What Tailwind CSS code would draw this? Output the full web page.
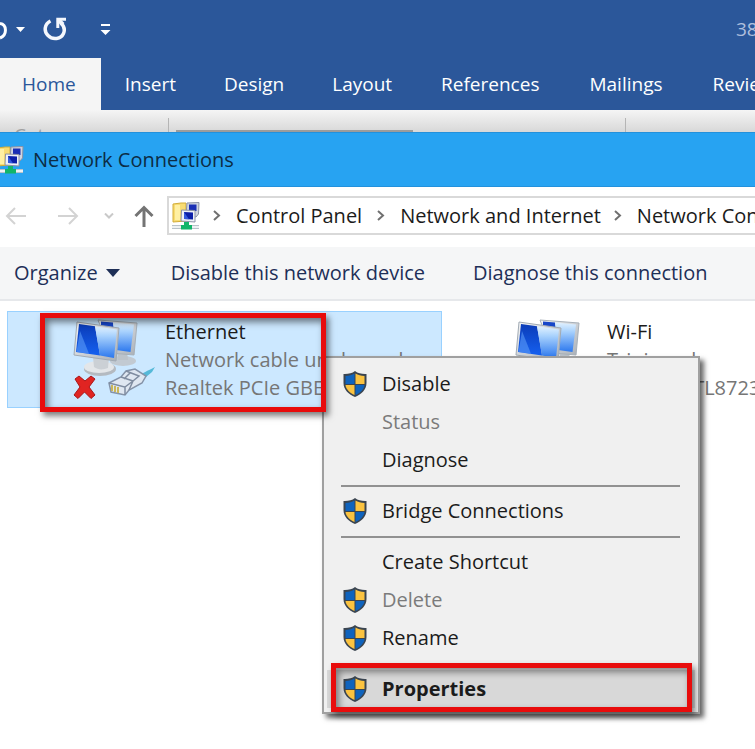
<!DOCTYPE html>
<html lang="en">
<head>
<meta charset="utf-8">
<title>Network Connections</title>
<script src="https://cdn.jsdelivr.net/npm/@tailwindcss/browser@4"></script>
</head>
<body class="min-h-screen overflow-hidden bg-white font-['Open_Sans','Noto_Sans',sans-serif] text-[20px] leading-7 text-[#1b1b1b]">

<svg class="absolute h-0 w-0" aria-hidden="true">
  <defs>
    <linearGradient id="screenDark" x1="0" y1="0" x2="0" y2="1"><stop offset="0" stop-color="#0b3cb8"/><stop offset="1" stop-color="#1560f0"/></linearGradient>
    <linearGradient id="screenLight" x1="0" y1="0" x2="0" y2="1"><stop offset="0" stop-color="#e2f2ff"/><stop offset="0.3" stop-color="#a9d2fd"/><stop offset="1" stop-color="#2c78ee"/></linearGradient>
    <linearGradient id="metal" x1="0" y1="0" x2="1" y2="1"><stop offset="0" stop-color="#f6f7f8"/><stop offset="1" stop-color="#a9afb6"/></linearGradient>
    <symbol id="shield" viewBox="0 0 26 28">
      <path d="M13 1 C10 3.5 6 4.2 1.5 4 V13 C1.5 20 7 24.5 13 27 C19 24.5 24.500 20 24.500 13 V4 C20 4.200 16 3.500 13 1Z" fill="#3b4550"/>
      <path d="M12.500 3.500 C10 5 7 6 3.500 6 V14 H12.500Z" fill="#0f63bd"/>
      <path d="M13.500 3.500 C16 5 19 6 22.500 6 V14 H13.500Z" fill="#fbc340"/>
      <path d="M3.500 15 H12.500 V25 C8 23 4 19.500 3.500 15Z" fill="#fbc340"/>
      <path d="M13.500 15 H22.500 C22 19.500 18 23 13.500 25Z" fill="#0f63bd"/>
    </symbol>
    <symbol id="folder" viewBox="0 0 28 28">
      <path d="M1 2 L9 1 L14 1 V19 L1 20Z" fill="#f8dc72" stroke="#d2ac38"/>
      <path d="M3 3 H8 V18 H3Z" fill="#fff0a3"/>
      <path d="M15 1 L27 0.500 L26.500 12 L24 15 L14 13Z" fill="#cfd5e0" stroke="#8c93a6"/>
      <path d="M17 2.500 H24.500 V9 H17Z" fill="#1a2fb5"/>
      <path d="M9.500 8 L23 8.500 V20 L9 19Z" fill="#eef1f8" stroke="#8c93a6"/>
      <path d="M12 10 L21 10.500 V17.500 L12 17Z" fill="#0b1fa8"/>
      <path d="M12 10 L17 17.200 L12 17Z" fill="#3459dc"/>
      <path d="M0 23 H27 V27 H0Z" fill="#b9c3ca"/>
      <path d="M0 24 H27 V26 H0Z" fill="#eef1f3"/>
      <path d="M12 20 H17 V23 H20 V27.500 H9 V23 H12Z" fill="#12b56a"/>
    </symbol>
    <symbol id="computers" viewBox="0 0 66 58">
      <ellipse cx="50" cy="42" rx="13" ry="5" fill="#c2cad2"/>
      <path d="M44 32 H54 L55 41 H45Z" fill="#bcc3ca"/>
      <path d="M25 1 L64 4 L61 36 L38 34Z" fill="url(#metal)" stroke="#a7b0b9"/>
      <path d="M28 2.500 L40 3.500 L41 10 L28 8Z" fill="#1746c8"/>
      <path d="M40 3.500 L61 5.500 L57.500 33 L43 31Z" fill="url(#screenLight)"/>
      <ellipse cx="27" cy="50" rx="16" ry="7" fill="#b4bac1"/>
      <ellipse cx="26" cy="48" rx="15" ry="6" fill="#e3e6e9"/>
      <path d="M20 38 H36 L35 49 C30 51 25 51 21 48Z" fill="#cbd0d5"/>
      <path d="M4 3 L46 9 L43 42 L1 36Z" fill="url(#metal)" stroke="#a2abb4"/>
      <path d="M6 5 L22 7.300 L27 36.500 L3 33Z" fill="url(#screenDark)"/>
      <path d="M22 7.300 L44 10.500 L41 39 L27 36.500Z" fill="url(#screenLight)"/>
      <path d="M7 12 L16 34.800 L3.500 33Z" fill="#5b9bf7" opacity=".6"/>
    </symbol>
  </defs>
</svg>

<header class="bg-[#2b579a] text-white">
  <div class="flex h-[58px] items-center justify-between">
    <div class="flex items-center">
      <button aria-label="Undo" class="w-[8px]"><svg class="block h-6 w-2" viewBox="0 0 8 24" fill="none" stroke="#fff" stroke-width="3"><path d="M0 6.500 C7 7.500 7.500 18 0 21"/></svg></button>
      <button aria-label="Undo options" class="ml-2"><svg class="block h-[5px] w-[9px]" viewBox="0 0 9 5"><path d="M0 0H9L4.500 5Z" fill="#fff"/></svg></button>
      <button aria-label="Redo" class="ml-[18px]"><svg class="block h-6 w-6" viewBox="0 0 24 24" fill="none" stroke="#f4f7fd" stroke-width="3.500"><path d="M7.500 4 C1.500 7 0.500 14 5 18.500 C10 23.500 18 22 20.500 16.500 C22 13 21.500 9.500 18 6"/><path d="M14.800 11 V2.300 H23" stroke-width="3"/><path d="M15 2.500 L20 7.500" stroke-width="4"/></svg></button>
      <button aria-label="Customize Quick Access Toolbar" class="ml-[33px]"><svg class="block h-[11px] w-[11px]" viewBox="0 0 11 11" fill="#fff"><path d="M1 0H10V2H1ZM0.500 6H10.500L5.500 11Z"/></svg></button>
    </div>
    <div class="w-[19px] overflow-hidden whitespace-nowrap text-[19px] text-[#aebfdd]">3880</div>
  </div>
  <nav class="flex h-[52px] items-stretch overflow-hidden whitespace-nowrap text-[19px]">
    <a href="#" class="flex items-center bg-[#f5f5f5] pl-[22px] pr-[25px] text-[#2b579a]">Home</a>
    <a href="#" class="flex items-center px-6">Insert</a>
    <a href="#" class="flex items-center px-6">Design</a>
    <a href="#" class="flex items-center px-6">Layout</a>
    <a href="#" class="flex items-center px-[25px]">References</a>
    <a href="#" class="flex items-center px-[25px]">Mailings</a>
    <a href="#" class="flex items-center px-[25px]">Review</a>
  </nav>
</header>

<div class="flex h-[22px] items-end overflow-hidden bg-linear-to-b from-[#f5f5f5] to-[#d8d8d8]">
  <div class="h-[7px] w-[168px] overflow-hidden pl-[14px] text-[19px] leading-5 text-[#a0a0a0]">Cut</div>
  <div class="h-[14px] w-px bg-[#b5b5b5]"></div>
  <div class="ml-[7px] h-[2px] w-[237px] bg-[#9c9c9c]"></div>
  <div class="ml-[212px] h-[14px] w-px bg-[#b5b5b5]"></div>
</div>

<main>
  <div class="flex h-[55px] items-center gap-[9px] border-y border-t-[#2391dc] border-b-[#2391dc] bg-[#27a3f2] text-[#0c2c45]">
    <div class="flex w-6 shrink-0 justify-end overflow-hidden"><svg class="h-7 w-7 shrink-0"><use href="#folder"/></svg></div>
    <h1>Network Connections</h1>
  </div>

  <div class="flex h-[60px] items-center whitespace-nowrap pb-[3px]">
    <div class="flex w-[167px] shrink-0 items-center pl-[5px]">
      <button aria-label="Back"><svg class="block h-[18px] w-[22px]" viewBox="0 0 22 18" fill="none" stroke="#d3d3d3" stroke-width="2"><path d="M21 9H2M10 1L2 9L10 17"/></svg></button>
      <button aria-label="Forward" class="ml-[30px]"><svg class="block h-[18px] w-[22px]" viewBox="0 0 22 18" fill="none" stroke="#d3d3d3" stroke-width="2"><path d="M1 9H20M12 1L20 9L12 17"/></svg></button>
      <button aria-label="Recent locations" class="ml-[25px]"><svg class="block h-[6px] w-[10px]" viewBox="0 0 10 6" fill="none" stroke="#c9c9c9" stroke-width="2"><path d="M1 0.500L5 4.500L9 0.500"/></svg></button>
      <button aria-label="Up" class="ml-5"><svg class="block h-[22px] w-[20px]" viewBox="0 0 20 22" fill="none" stroke="#747474" stroke-width="3"><path d="M10 22V3M1.500 11L10 2.500L18.500 11"/></svg></button>
    </div>
    <div class="flex h-[39px] flex-1 items-center overflow-hidden border-2 border-r-0 border-[#d9d9d9] pl-[3px]">
      <svg class="h-7 w-7 shrink-0"><use href="#folder"/></svg>
      <svg class="ml-[13px] h-[11px] w-2 shrink-0" viewBox="0 0 8 11" fill="none" stroke="#707070" stroke-width="2"><path d="M1 1L6 5.500L1 10"/></svg>
      <a href="#" class="ml-[15px]">Control Panel</a>
      <svg class="ml-[15px] h-[11px] w-2 shrink-0" viewBox="0 0 8 11" fill="none" stroke="#707070" stroke-width="2"><path d="M1 1L6 5.500L1 10"/></svg>
      <a href="#" class="ml-[15px]">Network and Internet</a>
      <svg class="ml-[13px] h-[11px] w-2 shrink-0" viewBox="0 0 8 11" fill="none" stroke="#707070" stroke-width="2"><path d="M1 1L6 5.500L1 10"/></svg>
      <a href="#" class="ml-[15px]">Network Connections</a>
    </div>
  </div>

  <div class="flex h-[54px] items-center overflow-hidden whitespace-nowrap border-b-2 border-[#e6e8eb] bg-[#f5f6f7] pl-[14px] text-[#1e2f57]">
    <button class="flex items-center gap-2">Organize <svg class="h-2 w-[14px]" viewBox="0 0 14 8"><path d="M0 0H14L7 8Z" fill="#1e2f57"/></svg></button>
    <button class="ml-[51px]">Disable this network device</button>
    <button class="ml-[48px]">Diagnose this connection</button>
  </div>

  <section class="relative h-[448px] overflow-hidden whitespace-nowrap pl-[7px] pt-[10px]" aria-label="Connections">
    <div class="flex">
      <div class="flex h-[97px] w-[435px] shrink-0 border border-[#99d1ff] bg-[#cce8ff] pl-[65px] pt-[7px]">
        <div class="relative h-20 w-[84px] shrink-0">
          <svg class="h-[58px] w-[66px]"><use href="#computers"/></svg>
          <svg class="absolute left-0 top-0 h-20 w-[84px]" viewBox="0 0 84 80" fill="none">
            <path d="M2 60 L6 57 L12 62 L18 57 L22 60 L16 68 L22 76 L18 79.500 L11.500 73 L5 79.500 L1 76 L7 68Z" fill="#e02422" stroke="#a81619"/>
            <path d="M64 57 C70 54 74 52 82 48 L79 53 L73 58Z" fill="#55b9d8"/>
            <path d="M36 64 L48 58 L53 52 L62 50 L73 57 L69 64 L56 71 L52 76 L38 73Z" fill="#dfe7f1" stroke="#8593a8" stroke-width="1.500"/>
            <path d="M36 64 L52 68 L52 76 M48 58 L60 62 L56 71 M53 52 L66 57 L60 62 M52 68 L60 62 M57 54 L51 60" stroke="#7f8ca0" stroke-width="1.500"/>
            <path d="M39 66V72M42 67V73M45 68V74" stroke="#c9b65a" stroke-width="2"/>
          </svg>
        </div>
        <div class="ml-2 -mt-px text-[#767676]">
          <div class="text-[#1b1b1b]">Ethernet</div>
          <div>Network cable unplugged</div>
          <div>Realtek PCIe GBE Family</div>
        </div>
      </div>
      <div class="flex h-[97px] w-[435px] shrink-0 border border-transparent pl-[72px] pt-[7px]">
        <div class="w-[84px] shrink-0"><svg class="h-[58px] w-[66px]"><use href="#computers"/></svg></div>
        <div class="ml-2 -mt-px text-[#767676]">
          <div class="text-[#1b1b1b]">Wi-Fi</div>
          <div>Trinimool</div>
          <div>Realtek RTL8723BE</div>
        </div>
      </div>
    </div>

    <div role="menu" class="absolute left-[322px] top-[55px] w-[378px] border-2 border-[#a0a0a0] bg-[#f0f0f0] px-[3px] pb-1 pt-[7px] shadow-[4px_4px_5px_rgba(0,0,0,0.6)]">
      <button role="menuitem" class="flex h-[38px] w-full items-center gap-[14px] pl-[15px]"><svg class="h-7 w-[26px]"><use href="#shield"/></svg>Disable</button>
      <button role="menuitem" disabled class="flex h-[38px] w-full items-center pl-[55px] text-[#7b7b7b]">Status</button>
      <button role="menuitem" class="flex h-[38px] w-full items-center pl-[55px]">Diagnose</button>
      <div class="flex h-[13px] items-center pl-[14px] pr-[15px]"><div class="h-[2px] flex-1 bg-[#919191]"></div></div>
      <button role="menuitem" class="flex h-[38px] w-full items-center gap-[14px] pl-[15px]"><svg class="h-7 w-[26px]"><use href="#shield"/></svg>Bridge Connections</button>
      <div class="flex h-[13px] items-center pl-[14px] pr-[15px]"><div class="h-[2px] flex-1 bg-[#919191]"></div></div>
      <button role="menuitem" class="flex h-[38px] w-full items-center pl-[55px]">Create Shortcut</button>
      <button role="menuitem" disabled class="flex h-[38px] w-full items-center gap-[14px] pl-[15px] text-[#7b7b7b]"><svg class="h-7 w-[26px]"><use href="#shield"/></svg>Delete</button>
      <button role="menuitem" class="flex h-[38px] w-full items-center gap-[14px] pl-[15px]"><svg class="h-7 w-[26px]"><use href="#shield"/></svg>Rename</button>
      <div class="flex h-[13px] items-center pl-[14px] pr-[15px]"><div class="h-[2px] flex-1 bg-[#919191]"></div></div>
      <button role="menuitem" class="flex h-[38px] w-full items-center gap-[14px] bg-[#d8d8d8] pl-[15px] font-bold"><svg class="h-7 w-[26px]"><use href="#shield"/></svg>Properties</button>
      <div class="absolute bottom-0 left-[7px] right-[6px] h-[49px] border-[5px] border-[#e80c0c] shadow-[3px_4px_6px_rgba(0,0,0,0.45),inset_3px_4px_7px_rgba(0,0,0,0.45)]"></div>
    </div>

    <div class="absolute left-[40px] top-[12px] h-[99px] w-[286px] border-[5px] border-[#e80c0c] shadow-[3px_4px_6px_rgba(0,0,0,0.5),inset_3px_4px_7px_rgba(0,0,0,0.5)]"></div>
  </section>
</main>
</body>
</html>
